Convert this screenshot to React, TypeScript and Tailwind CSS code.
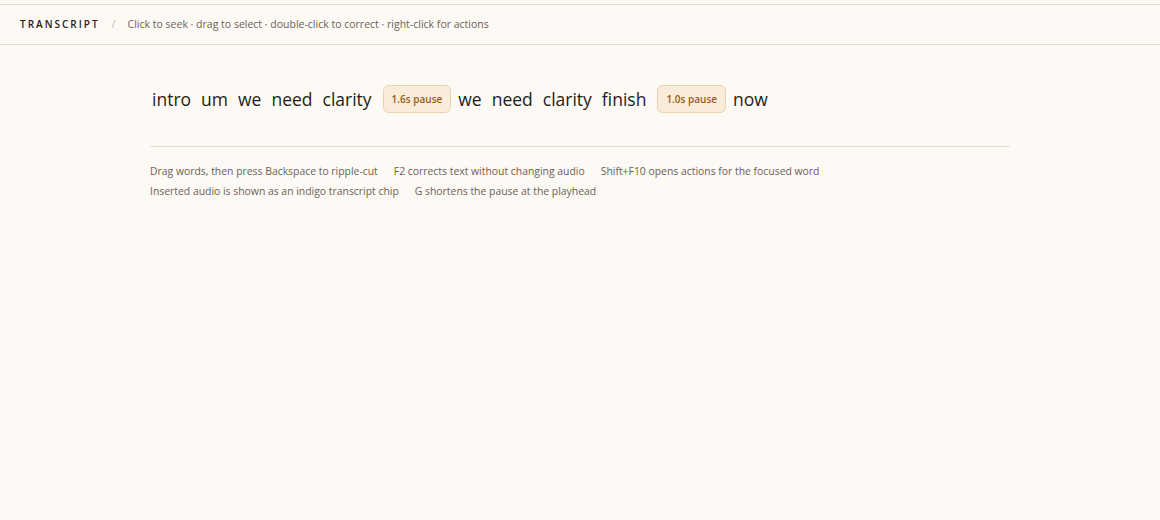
import React from "react";

type Item = { t: "w"; text: string } | { t: "p"; text: string };

const items: Item[] = [
  { t: "w", text: "intro" },
  { t: "w", text: "um" },
  { t: "w", text: "we" },
  { t: "w", text: "need" },
  { t: "w", text: "clarity" },
  { t: "p", text: "1.6s pause" },
  { t: "w", text: "we" },
  { t: "w", text: "need" },
  { t: "w", text: "clarity" },
  { t: "w", text: "finish" },
  { t: "p", text: "1.0s pause" },
  { t: "w", text: "now" },
];

export default function App() {
  return (
    <div
      className="min-h-[520px] bg-[#fdf9f4] pt-1"
      style={{ fontFamily: '"Open Sans", "Noto Sans", sans-serif' }}
    >
      <div className="flex h-[41px] items-center border-y border-[#e6ddd0] px-5">
        <span className="text-[10px] font-semibold tracking-[0.2em] text-[#2a2118]">TRANSCRIPT</span>
        <span className="ml-3 text-[11px] text-[#c9bfb2]">/</span>
        <span className="ml-3 text-[10.5px] text-[#6b6259]">
          Click to seek · drag to select · double-click to correct · right-click for actions
        </span>
      </div>
      <div className="mx-[150px] pt-[40px]">
        <div className="flex flex-wrap items-center gap-1 text-[17.5px] text-[#231d17]">
          {items.map((it, i) =>
            it.t === "w" ? (
              <span key={i} className="px-[3px] leading-[28px] first:pl-[2px]">
                {it.text}
              </span>
            ) : (
              <span
                key={i}
                className="ml-1 flex h-7 items-center rounded-md border border-[#ead2ad] bg-[#f9ecdb] px-2 text-[10px] font-semibold text-[#9a5a16]"
              >
                {it.text}
              </span>
            )
          )}
        </div>
        <div className="mt-[33px] border-t border-[#e6ddd0] pt-[14px] text-[10.4px] leading-5 text-[#6b6259]">
          <div className="flex gap-4">
            <span>Drag words, then press Backspace to ripple-cut</span>
            <span>F2 corrects text without changing audio</span>
            <span>Shift+F10 opens actions for the focused word</span>
          </div>
          <div className="flex gap-4">
            <span>Inserted audio is shown as an indigo transcript chip</span>
            <span>G shortens the pause at the playhead</span>
          </div>
        </div>
      </div>
    </div>
  );
}
